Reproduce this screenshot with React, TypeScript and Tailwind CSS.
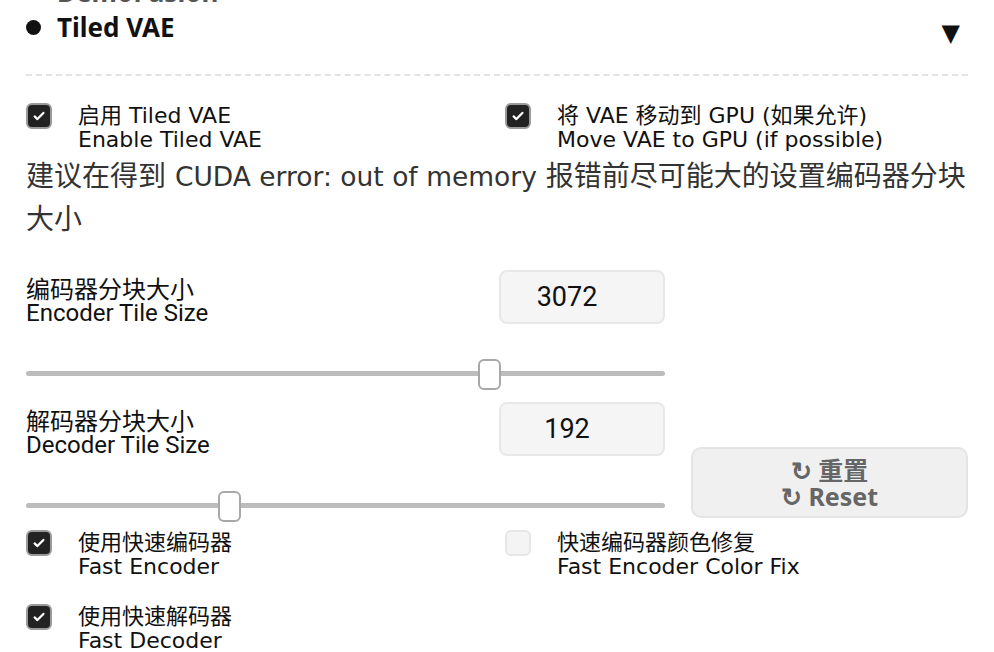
import React from "react";

const font = { fontFamily: '"DejaVu Sans", "Noto Sans CJK SC", sans-serif' };
const narrow = { fontFamily: '"Roboto", "Noto Sans CJK SC", sans-serif' };
const heading = { fontFamily: '"Noto Sans", "Noto Sans CJK SC", sans-serif' };

function Check({ checked }: { checked: boolean }) {
  if (!checked) {
    return (
      <div className="mt-[1px] h-[26px] w-[26px] shrink-0 rounded-[6px] border-2 border-[#e6e6e6] bg-[#f4f4f4]" />
    );
  }
  return (
    <div className="mt-[1px] flex h-[26px] w-[26px] shrink-0 items-center justify-center rounded-[6px] border-2 border-[#9a9a9a] bg-[#222]">
      <svg width="14" height="14" viewBox="0 0 16 16">
        <path d="M3 8.5l3.2 3L13 4.5" fill="none" stroke="#fff" strokeWidth="2.6" strokeLinecap="round" strokeLinejoin="round" />
      </svg>
    </div>
  );
}

function CheckItem({ checked, zh, en }: { checked: boolean; zh: string; en: string }) {
  return (
    <div className="flex gap-[26px]">
      <Check checked={checked} />
      <div className="pt-[2px] text-[22px] leading-[24px] text-[#111]">
        <div>{zh}</div>
        <div>{en}</div>
      </div>
    </div>
  );
}

function SliderRow({ zh, en, value, thumb }: { zh: string; en: string; value: string; thumb: number }) {
  return (
    <div>
      <div className="flex items-start justify-between">
        <div className="pt-[9px] text-[24px] leading-[23px] text-[#111]" style={narrow}>
          <div>{zh}</div>
          <div>{en}</div>
        </div>
        <div
          className="flex h-[54px] w-[166px] items-center justify-center rounded-[8px] border-2 border-[#e8e8e8] bg-[#f5f5f5] pr-[30px] text-[27px] text-[#111]"
          style={narrow}
        >
          {value}
        </div>
      </div>
      <div className="relative mt-[34px] h-[30px]">
        <div className="absolute left-0 right-0 top-[12px] h-[5px] rounded-full bg-[#bcbcbc]" />
        <div
          className="absolute top-0 h-[31px] w-[23px] rounded-[6px] border-2 border-[#a8a8a8] bg-white"
          style={{ left: thumb }}
        />
      </div>
    </div>
  );
}

export default function App() {
  return (
    <div className="h-[652px] w-[994px] overflow-hidden bg-white px-[26px]" style={font}>
      <div className="-mt-[24px] flex items-center gap-[16px] text-[26px] font-bold leading-[33px] text-[#555]" style={heading}>
        <span className="h-[15px] w-[15px] rounded-full bg-[#555]" />
        <span>DemoFusion</span>
      </div>
      <div className="mt-[2px] flex h-[33px] items-center justify-between">
        <div className="flex items-center gap-[16px] text-[26px] font-bold leading-[33px] text-[#111]" style={heading}>
          <span className="h-[15px] w-[15px] rounded-full bg-[#111]" />
          <span>Tiled VAE</span>
        </div>
        <span className="mr-[8px] translate-y-[6px] text-[24px] leading-[33px] text-[#111]">▼</span>
      </div>
      <div className="mt-[30px] border-t-2 border-dashed border-[#e2e2e2]" />
      <div className="mt-[26px] grid grid-cols-2 gap-[16px]">
        <CheckItem checked zh="启用 Tiled VAE" en="Enable Tiled VAE" />
        <CheckItem checked zh="将 VAE 移动到 GPU (如果允许)" en="Move VAE to GPU (if possible)" />
      </div>
      <p className="mt-[3px] text-[28px] leading-[43px] text-[#333]">
        建议在得到 <span className="text-[26.5px]">CUDA error: out of memory</span> 报错前尽可能大的设置编码器分块大小
      </p>
      <div className="mt-[29px] flex items-end gap-[26px]">
        <div className="flex w-[639px] flex-col gap-[13px]">
          <SliderRow zh="编码器分块大小" en="Encoder Tile Size" value="3072" thumb={452} />
          <SliderRow zh="解码器分块大小" en="Decoder Tile Size" value="192" thumb={192} />
        </div>
        <button className="mb-[3px] flex h-[71px] flex-1 flex-col items-center justify-center rounded-[10px] border-2 border-[#e4e4e4] bg-[#f0f0f0] text-[25px] font-bold leading-[26px] text-[#666]" style={heading}>
          <span>↻ 重置</span>
          <span>↻ Reset</span>
        </button>
      </div>
      <div className="mt-[8px] grid grid-cols-2 gap-[16px]">
        <CheckItem checked zh="使用快速编码器" en="Fast Encoder" />
        <CheckItem checked={false} zh="快速编码器颜色修复" en="Fast Encoder Color Fix" />
      </div>
      <div className="mt-[24px]">
        <CheckItem checked zh="使用快速解码器" en="Fast Decoder" />
      </div>
    </div>
  );
}
